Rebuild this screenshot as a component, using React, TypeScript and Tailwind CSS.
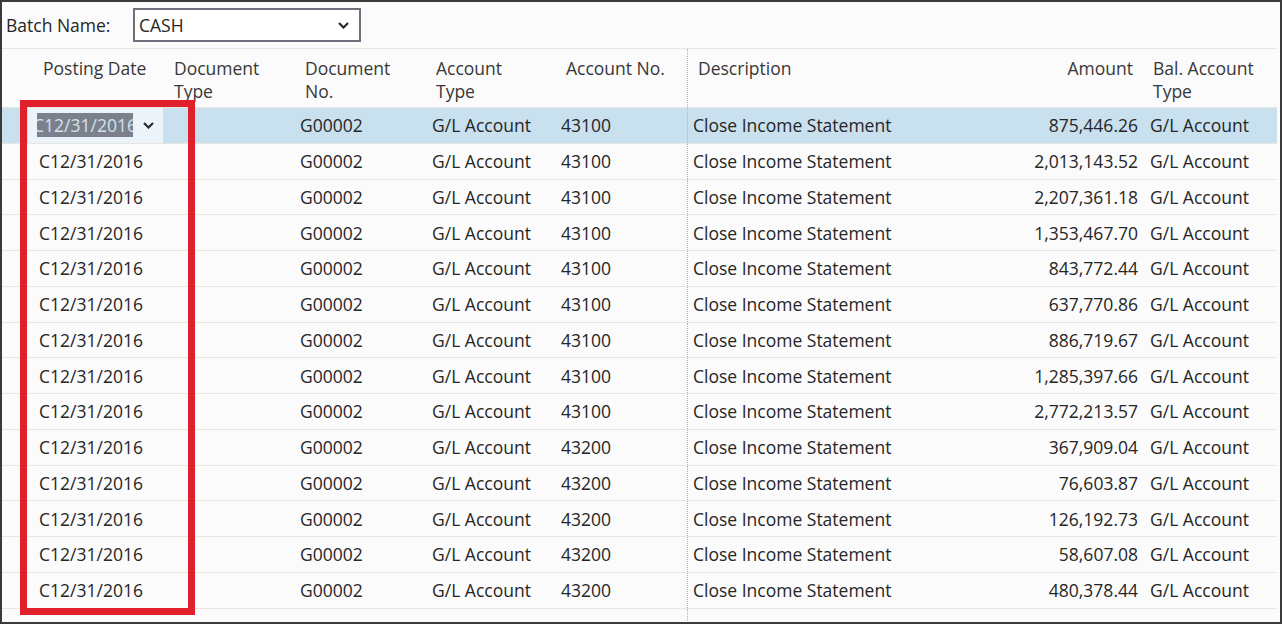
import React from "react";

type Line = { no: string; amount: string };

const lines: Line[] = [
  { no: "43100", amount: "875,446.26" },
  { no: "43100", amount: "2,013,143.52" },
  { no: "43100", amount: "2,207,361.18" },
  { no: "43100", amount: "1,353,467.70" },
  { no: "43100", amount: "843,772.44" },
  { no: "43100", amount: "637,770.86" },
  { no: "43100", amount: "886,719.67" },
  { no: "43100", amount: "1,285,397.66" },
  { no: "43100", amount: "2,772,213.57" },
  { no: "43200", amount: "367,909.04" },
  { no: "43200", amount: "76,603.87" },
  { no: "43200", amount: "126,192.73" },
  { no: "43200", amount: "58,607.08" },
  { no: "43200", amount: "480,378.44" },
];

const cols = "grid grid-cols-[26px_133px_131px_131px_130px_134px_314px_144px_1fr]";

function Chevron({ className = "" }: { className?: string }) {
  return (
    <svg width="11" height="7" viewBox="0 0 11 7" className={className}>
      <polyline points="1,1 5.5,5.5 10,1" fill="none" stroke="#2b2b2b" strokeWidth="2.2" />
    </svg>
  );
}

export default function App() {
  return (
    <main
      className="relative h-[624px] w-[1282px] overflow-hidden border-2 border-[#3a3a3a] bg-[#fbfbfb] text-[17.5px] text-[#262626]"
      style={{ fontFamily: '"Open Sans", "Noto Sans", sans-serif' }}
    >
      <div className="flex h-[46px] items-center">
        <span className="ml-[4px] w-[127px] whitespace-nowrap">Batch Name:</span>
        <div className="flex h-[34px] w-[228px] items-center justify-between border-2 border-[#6d717c] bg-white pl-[4px] pr-[10px]">
          <span>CASH</span>
          <Chevron />
        </div>
      </div>

      <div className="mr-[3px] border-t border-[#ebe5df]">
        <div className={`${cols} h-[59px] whitespace-nowrap border-b border-[#ebe5df] leading-[23px] text-[#383838]`}>
          <div />
          <div className="pl-[15px] pt-[8px]">Posting Date</div>
          <div className="pl-[13px] pt-[8px]">Document<br />Type</div>
          <div className="pl-[13px] pt-[8px]">Document<br />No.</div>
          <div className="pl-[13px] pt-[8px]">Account<br />Type</div>
          <div className="pl-[13px] pt-[8px]">Account No.</div>
          <div className="border-l border-dotted border-[#9fb6c8] pl-[10px] pt-[8px]">Description</div>
          <div className="pr-[12px] pt-[8px] text-right">Amount</div>
          <div className="pl-[8px] pt-[8px]">Bal. Account<br />Type</div>
        </div>

        {lines.map((line, i) => (
          <div
            key={i}
            className={`${cols} h-[35.75px] items-center whitespace-nowrap border-b border-[#ebe5df] ${i === 0 ? "bg-[#c9e0ef]" : ""}`}
          >
            <div />
            {i === 0 ? (
              <div className="mr-[-2px] flex h-full items-center bg-[#edf4f9] pl-[9px]">
                <span className="inline-block w-[96px] overflow-hidden bg-[#7b808b] leading-[24px] text-[#cfe2ef]">
                  <span className="ml-[-4px]">C12/31/2016</span>
                </span>
                <Chevron className="ml-[10px]" />
              </div>
            ) : (
              <div className="pl-[11px]">C12/31/2016</div>
            )}
            <div />
            <div className="pl-[8px]">G00002</div>
            <div className="pl-[9px]">G/L Account</div>
            <div className="pl-[8px]">{line.no}</div>
            <div className="flex h-full items-center border-l border-dotted border-[#9fb6c8] pl-[5px]">Close Income Statement</div>
            <div className="pr-[7px] text-right">{line.amount}</div>
            <div className="pl-[5px]">G/L Account</div>
          </div>
        ))}
        <div className={`${cols} h-[20px]`}>
          <div />
          <div />
          <div />
          <div />
          <div />
          <div />
          <div className="border-l border-dotted border-[#9fb6c8]" />
        </div>
      </div>

      <div className="absolute left-[18px] top-[98px] h-[515px] w-[175px] border-[7px] border-[#e0202a]" />
    </main>
  );
}
